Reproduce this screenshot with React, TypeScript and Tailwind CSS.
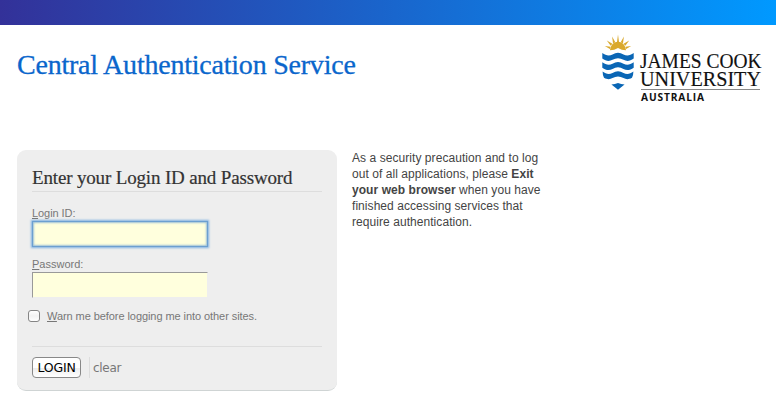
import React from 'react';

const Logo = () => (
  <svg className="overflow-visible" width="164" height="72" viewBox="600 32 164 72" role="img" aria-label="James Cook University Australia">
    <g fill="#daa92c">
      <path d="M610 50.2 Q610.8 44.8 614.6 42.6 Q618 40.8 621.4 42.6 Q625.2 44.8 626 50.2 Q621.5 50 618 47.9 Q614.5 50 610 50.2Z" />
      <path d="M617 42 L618 34.4 L619 42Z M613 43.2 L612.1 36.6 L615.3 42.2Z M623 43.2 L623.9 36.6 L620.7 42.2Z M610.7 45.8 L606.8 40.4 L612.4 43.8Z M625.3 45.8 L629.2 40.4 L623.6 43.8Z M609.9 49 L604.8 46.1 L610.6 46.8Z M626.1 49 L631.2 46.1 L625.4 46.8Z" />
    </g>
    <g fill="#0a66b5">
      <path d="M602.3 53 C606 55.8 609.5 56 612.5 54.4 Q618 51 623.5 54.4 C626.5 56 630 55.8 633.7 53 V58.6 C630 61.3 626.5 61.5 623.5 59.8 Q618 56.5 612.5 59.8 C609.5 61.5 606 61.3 602.3 58.6Z" />
      <path d="M602.3 62.3 C606 65.1 609.5 65.3 612.5 63.7 Q618 60.3 623.5 63.7 C626.5 65.3 630 65.1 633.7 62.3 V67.7 C630 70.4 626.5 70.6 623.5 68.9 Q618 65.6 612.5 68.9 C609.5 70.6 606 70.4 602.3 67.7Z" />
      <path d="M602.6 71.6 C606 74.4 609.5 74.6 612.5 73 Q618 69.6 623.5 73 C626.5 74.6 630 74.4 633.4 71.6 Q633.4 75.2 632 77.8 C628.5 79.8 626 79.5 623.5 78.1 Q618 74.8 612.5 78.1 C610 79.5 607.5 79.8 604 77.8 Q602.6 75.2 602.6 71.6Z" />
      <path d="M611.4 84.6 Q615 84.4 618 83 Q621 84.4 624.6 84.6 Q621.4 87.2 618 89.7 Q614.6 87.2 611.4 84.6Z" />
    </g>
    <g fill="#111" fontFamily="'Liberation Serif', serif" stroke="#111" strokeWidth=".15">
      <text x="640" y="68.2" fontSize="20.4" textLength="121.5" lengthAdjust="spacingAndGlyphs">JAMES COOK</text>
      <text x="640" y="86.3" fontSize="20.4" textLength="121" lengthAdjust="spacingAndGlyphs">UNIVERSITY</text>
    </g>
    <path d="M641 89.5H760" stroke="#888" />
    <text x="641" y="101" fontSize="10.2" fontWeight="700" fill="#111" fontFamily="'Open Sans', sans-serif" textLength="63" lengthAdjust="spacing">AUSTRALIA</text>
  </svg>
);

export default function App() {
  return (
    <div className="h-[414px] w-[776px] overflow-hidden bg-white font-['Liberation_Sans',Arial,sans-serif]">
      <div className="h-[25px] bg-linear-to-r/srgb from-[#333199] to-[#0099ff]" />
      <header className="flex h-[125px] items-start justify-between pr-3 pl-[17px]">
        <h1 className="mt-[24px] font-['Liberation_Serif',serif] text-[28px] leading-8 tracking-[-0.22px] whitespace-nowrap text-[#0a66cc] [-webkit-text-stroke:0.3px_#0a66cc]">
          Central Authentication Service
        </h1>
        <div className="mt-[7px]"><Logo /></div>
      </header>
      <main className="flex items-start gap-[15px] pl-[17px]">
        <form className="h-[241px] w-[320px] rounded-[9px] border-b border-[#cfd4d4] bg-[#eee] px-[15px]" onSubmit={(e) => e.preventDefault()}>
          <h2 className="h-[42px] border-b border-[#ddd] pt-[16px] font-['Liberation_Serif',serif] text-[19px] leading-6 tracking-[-0.16px] whitespace-nowrap text-[#333] [-webkit-text-stroke:0.2px_#333]">
            Enter your Login ID and Password
          </h2>
          <label htmlFor="user" className="mt-[14px] block h-[15px] text-[11px] leading-[15px] tracking-[-0.06px] text-[#777]"><u>L</u>ogin ID:</label>
          <input id="user" className="block h-[26px] w-[176px] border border-[#6c9fd0] bg-[#ffd] shadow-[0_0_2px_1px_#7fb0e0,inset_0_0_2px_1px_#9dc0d8] outline-none" />
          <label htmlFor="pass" className="mt-[10px] block h-[15px] text-[11px] leading-[15px] text-[#777]"><u>P</u>assword:</label>
          <input id="pass" type="password" className="block h-[26px] w-[176px] border-t border-r border-b border-l border-t-[#999] border-r-[#eee] border-b-[#eee] border-l-[#999] bg-[#ffd] outline-none" />
          <div className="mt-[11px] -ml-1 flex h-[15px] items-center gap-[7px] text-[11px] leading-[15px] tracking-[-0.07px] text-[#777]">
            <input id="warn" type="checkbox" className="relative -top-px size-3 appearance-none rounded-[3px] border border-[#858585] bg-linear-to-b from-white via-[#f2f2f2] to-white" />
            <label htmlFor="warn" className="whitespace-nowrap"><u>W</u>arn me before logging me into other sites.</label>
          </div>
          <div className="mt-[22px] flex border-t border-[#ddd] pt-[10px] font-['DejaVu_Sans',sans-serif]">
            <button className="h-[21px] w-[49px] rounded-[4px] border border-[#888] bg-linear-to-b from-white from-50% via-[#eee] via-55% to-white text-[12.5px] leading-[18px] tracking-[-0.2px] text-black">LOGIN</button>
            <button type="reset" className="ml-2 h-[21px] border-l border-[#ddd] pl-[3px] text-[12px] leading-[20px] tracking-[-0.3px] text-[#777]">clear</button>
          </div>
        </form>
        <p className="w-[200px] text-[12px] leading-4 tracking-[0.06px] text-[#444]">
          As a security precaution and to log<br />out of all applications, please <b>Exit</b><br /><b>your web browser</b> when you have<br />finished accessing services that<br />require authentication.
        </p>
      </main>
    </div>
  );
}
